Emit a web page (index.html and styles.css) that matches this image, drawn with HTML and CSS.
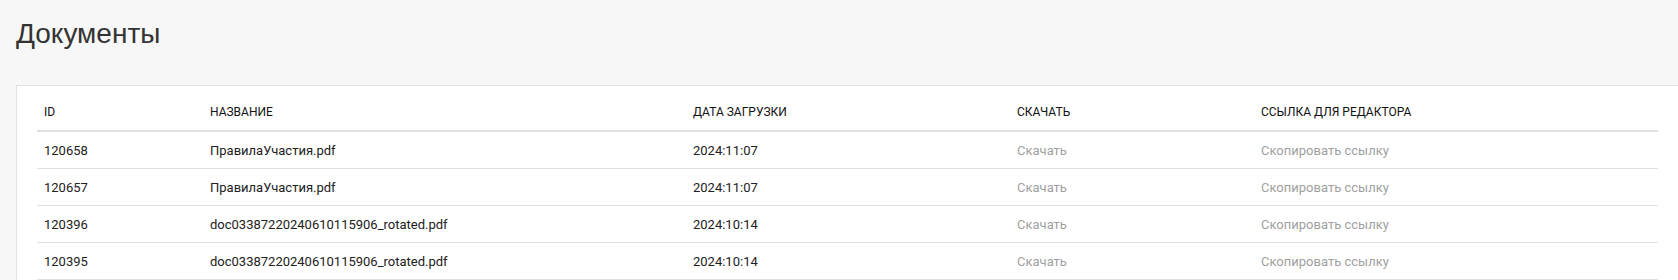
FILE: index.html
```html
<!DOCTYPE html>
<html lang="ru">
<head>
<meta charset="utf-8">
<link rel="stylesheet" href="styles.css">
</head>
<body>
<h1 class="page-title">Документы</h1>
<div class="card">
  <table class="docs">
    <colgroup>
      <col class="c-id"><col class="c-name"><col class="c-date"><col class="c-dl"><col class="c-link">
    </colgroup>
    <thead>
      <tr><th>ID</th><th>НАЗВАНИЕ</th><th>ДАТА ЗАГРУЗКИ</th><th>СКАЧАТЬ</th><th>ССЫЛКА ДЛЯ РЕДАКТОРА</th></tr>
    </thead>
    <tbody>
      <tr><td>120658</td><td>ПравилаУчастия.pdf</td><td>2024:11:07</td><td><a class="act">Скачать</a></td><td><a class="act">Скопировать ссылку</a></td></tr>
      <tr><td>120657</td><td>ПравилаУчастия.pdf</td><td>2024:11:07</td><td><a class="act">Скачать</a></td><td><a class="act">Скопировать ссылку</a></td></tr>
      <tr><td>120396</td><td>doc03387220240610115906_rotated.pdf</td><td>2024:10:14</td><td><a class="act">Скачать</a></td><td><a class="act">Скопировать ссылку</a></td></tr>
      <tr><td>120395</td><td>doc03387220240610115906_rotated.pdf</td><td>2024:10:14</td><td><a class="act">Скачать</a></td><td><a class="act">Скопировать ссылку</a></td></tr>
    </tbody>
  </table>
</div>
</body>
</html>
```
FILE: styles.css
```css
html, body {
  margin: 0;
  padding: 0;
  background: #f7f7f7;
  overflow: hidden;
}
body {
  font-family: Roboto, "Noto Sans", sans-serif;
  color: #212121;
}
.page-title {
  margin: 0;
  padding: 18px 0 0 16px;
  height: 85px;
  box-sizing: border-box;
  font-family: "Liberation Sans", Arial, sans-serif;
  font-weight: 400;
  font-size: 28px;
  line-height: 32px;
  color: #333;
}
.card {
  margin-left: 16px;
  width: 1682px;
  box-sizing: border-box;
  background: #fff;
  border: 1px solid #e2e2e2;
  padding: 8px 20px 20px 20px;
}
.docs {
  border-collapse: collapse;
  table-layout: fixed;
  width: 1621px;
}
.c-id { width: 166px; }
.c-name { width: 483px; }
.c-date { width: 324px; }
.c-dl { width: 244px; }
.c-link { width: 404px; }
.docs th {
  height: 36px;
  padding: 0 7px;
  text-align: left;
  font-weight: 400;
  font-size: 12px;
  color: #111;
  border-bottom: 2px solid #e0e0e0;
  vertical-align: middle;
}
.docs td {
  height: 36px;
  padding: 0 7px;
  font-size: 13px;
  color: #212121;
  border-bottom: 1px solid #e0e0e0;
  vertical-align: middle;
}
.act {
  color: #a0a0a0;
  cursor: pointer;
}
```
